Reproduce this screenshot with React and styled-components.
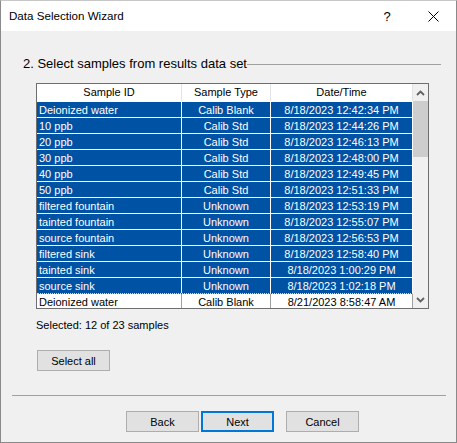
import React from 'react';
import styled, { createGlobalStyle } from 'styled-components';

const Global = createGlobalStyle`
  html, body { margin: 0; padding: 0; background: #f0f0f0; }
  * { box-sizing: border-box; }
`;

const Window = styled.div`
  width: 457px;
  height: 443px;
  border: 1px solid #8a8a8a;
  border-top-color: #c8c8c8;
  background: #f0f0f0;
  display: flex;
  flex-direction: column;
  font-family: "Liberation Sans", Arial, sans-serif;
  color: #000;
  overflow: hidden;
`;

const TitleBar = styled.div`
  height: 30px;
  background: #fff;
  display: flex;
  align-items: center;
  padding-left: 8px;
  flex-shrink: 0;
`;

const Title = styled.div`
  flex: 1;
  font-size: 11.6px;
  line-height: 14px;
`;

const TitleButton = styled.div`
  width: 46px;
  height: 30px;
  display: flex;
  align-items: center;
  justify-content: center;
  font-size: 13px;
`;

const Body = styled.div`
  flex: 1;
  display: flex;
  flex-direction: column;
  padding: 0 10px 0 11px;
`;

const HeadingRow = styled.div`
  display: flex;
  align-items: center;
  margin-top: 25px;
  padding-left: 11px;
  padding-right: 5px;
  height: 16px;
`;

const Heading = styled.div`
  font-size: 13px;
  line-height: 16px;
  white-space: nowrap;
`;

const HeadingLine = styled.div`
  flex: 1;
  height: 1px;
  background: #a0a0a0;
`;

const TableBox = styled.div`
  margin-top: 11px;
  margin-left: 24px;
  width: 393px;
  height: 226px;
  border: 1px solid #6e6e6e;
  background: #fff;
  display: flex;
  overflow: hidden;
`;

const GridArea = styled.div`
  width: 376px;
  display: flex;
  flex-direction: column;
  overflow: hidden;
`;

const Row = styled.div`
  display: grid;
  grid-template-columns: 145px 89px 142px;
  height: ${p => (p.$header ? 18 : 16)}px;
  flex-shrink: 0;
  background: ${p => (p.$selected ? '#0052a4' : '#fff')};
  color: ${p => (p.$selected ? '#fff' : '#000')};
  border-bottom: 1px ${p => (p.$focus ? 'dotted #f5d9a0' : 'solid #fff')};
`;

const Cell = styled.div`
  font-size: 11px;
  line-height: 15px;
  white-space: nowrap;
  overflow: hidden;
  padding: ${p => (p.$header ? '1px 2px 0' : '1px 2px 0')};
  text-align: ${p => (p.$left ? 'left' : 'center')};
  border-right: ${p => (p.$header ? '1px solid #e3e3e3' : p.$selected ? '1px solid #fff' : '1px solid #a0a0a0')};
`;

const ScrollBar = styled.div`
  width: 15px;
  background: #f0f0f0;
  display: flex;
  flex-direction: column;
`;

const Arrow = styled.div`
  height: 17px;
  display: flex;
  align-items: center;
  justify-content: center;
  flex-shrink: 0;
`;

const Thumb = styled.div`
  height: 56px;
  background: #cdcdcd;
`;

const Track = styled.div`
  flex: 1;
`;

const Status = styled.div`
  margin-top: 10px;
  margin-left: 24px;
  font-size: 11px;
  line-height: 13px;
`;

const Button = styled.button`
  width: 73px;
  height: 21px;
  padding: 0;
  background: #e1e1e1;
  border: ${p => (p.$default ? '2px solid #0078d7' : '1px solid #adadad')};
  font-family: "Liberation Sans", Arial, sans-serif;
  font-size: 11px;
  color: #000;
  display: flex;
  align-items: center;
  justify-content: center;
`;

const SelectAll = styled(Button)`
  margin-top: 18px;
  margin-left: 25px;
`;

const Separator = styled.div`
  margin-top: 24px;
  height: 1px;
  background: #a0a0a0;
`;

const ButtonRow = styled.div`
  margin-top: 15px;
  margin-left: 114px;
  display: flex;
  gap: 2px;
`;

const Spacer = styled.div`
  width: 8px;
`;

const rows = [
  ['Deionized water', 'Calib Blank', '8/18/2023 12:42:34 PM', true],
  ['10 ppb', 'Calib Std', '8/18/2023 12:44:26 PM', true],
  ['20 ppb', 'Calib Std', '8/18/2023 12:46:13 PM', true],
  ['30 ppb', 'Calib Std', '8/18/2023 12:48:00 PM', true],
  ['40 ppb', 'Calib Std', '8/18/2023 12:49:45 PM', true],
  ['50 ppb', 'Calib Std', '8/18/2023 12:51:33 PM', true],
  ['filtered fountain', 'Unknown', '8/18/2023 12:53:19 PM', true],
  ['tainted fountain', 'Unknown', '8/18/2023 12:55:07 PM', true],
  ['source fountain', 'Unknown', '8/18/2023 12:56:53 PM', true],
  ['filtered sink', 'Unknown', '8/18/2023 12:58:40 PM', true],
  ['tainted sink', 'Unknown', '8/18/2023 1:00:29 PM', true],
  ['source sink', 'Unknown', '8/18/2023 1:02:18 PM', true, true],
  ['Deionized water', 'Calib Blank', '8/21/2023 8:58:47 AM', false],
];

const Chevron = ({ up }) => (
  <svg width="9" height="6" viewBox="0 0 9 6">
    <path
      d={up ? 'M1 5 L4.5 1.5 L8 5' : 'M1 1 L4.5 4.5 L8 1'}
      fill="none"
      stroke="#606060"
      strokeWidth="1.8"
    />
  </svg>
);

export default function App() {
  return (
    <>
      <Global />
      <Window>
        <TitleBar>
          <Title>Data Selection Wizard</Title>
          <TitleButton>?</TitleButton>
          <TitleButton>
            <svg width="11" height="11" viewBox="0 0 11 11">
              <path d="M0.5 0.5 L10.5 10.5 M10.5 0.5 L0.5 10.5" stroke="#000" strokeWidth="1" />
            </svg>
          </TitleButton>
        </TitleBar>
        <Body>
          <HeadingRow>
            <Heading>2. Select samples from results data set</Heading>
            <HeadingLine />
          </HeadingRow>
          <TableBox>
            <GridArea>
              <Row $header>
                <Cell $header>Sample ID</Cell>
                <Cell $header>Sample Type</Cell>
                <Cell $header>Date/Time</Cell>
              </Row>
              {rows.map((r, i) => (
                <Row key={i} $selected={r[3]} $focus={r[4]}>
                  <Cell $left $selected={r[3]}>{r[0]}</Cell>
                  <Cell $selected={r[3]}>{r[1]}</Cell>
                  <Cell $selected={r[3]}>{r[2]}</Cell>
                </Row>
              ))}
            </GridArea>
            <ScrollBar>
              <Arrow><Chevron up /></Arrow>
              <Thumb />
              <Track />
              <Arrow><Chevron /></Arrow>
            </ScrollBar>
          </TableBox>
          <Status>Selected: 12 of 23 samples</Status>
          <SelectAll>Select all</SelectAll>
          <Separator />
          <ButtonRow>
            <Button>Back</Button>
            <Button $default>Next</Button>
            <Spacer />
            <Button>Cancel</Button>
          </ButtonRow>
        </Body>
      </Window>
    </>
  );
}
